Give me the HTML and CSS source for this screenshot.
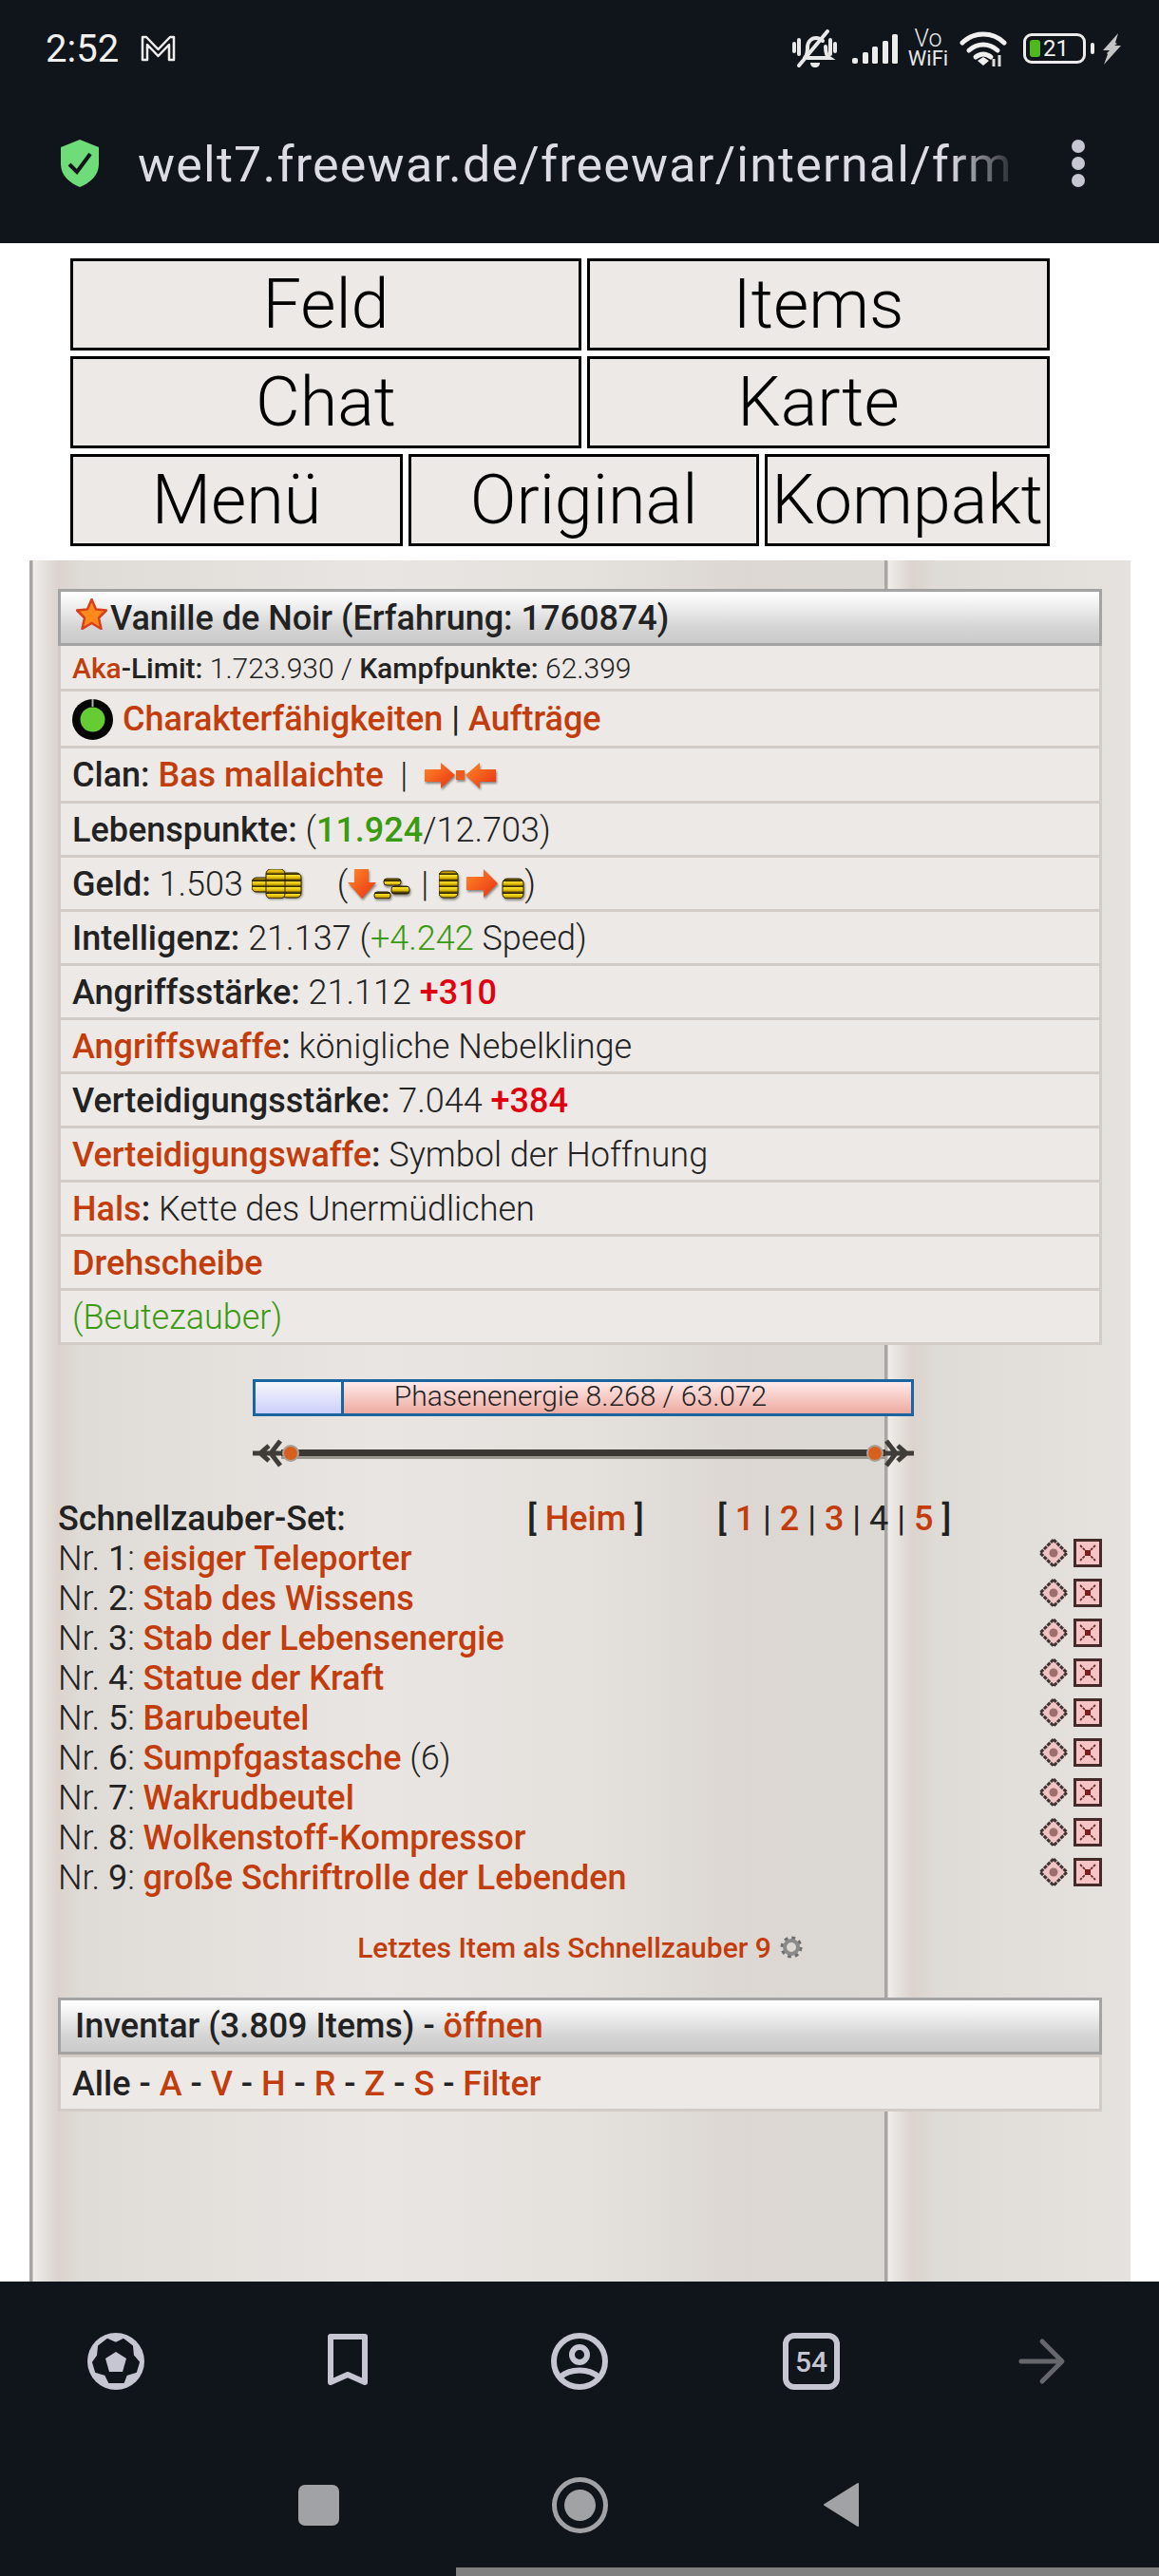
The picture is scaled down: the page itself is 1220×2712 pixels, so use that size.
FILE: index.html
```html
<!DOCTYPE html>
<html lang="de">
<head>
    <meta charset="UTF-8">
    <meta name="viewport" content="width=device-width, initial-scale=1.0">
    <title>Freewar</title>
    <link rel="stylesheet" href="styles.css">
</head>
<body>
    <svg class="defs" width="0" height="0">
        <defs>
            <linearGradient id="coinStripes" x1="0" y1="0" x2="0" y2="6.500" gradientUnits="userSpaceOnUse" spreadMethod="repeat">
                <stop offset="0" stop-color="#fbe330"/>
                <stop offset=".5" stop-color="#d8b000"/>
                <stop offset=".72" stop-color="#5a4a00"/>
                <stop offset="1" stop-color="#1e1800"/>
            </linearGradient>
            <linearGradient id="arrowFill" x1="0" y1="0" x2="1" y2="1">
                <stop offset="0" stop-color="#ff8a2a"/>
                <stop offset="1" stop-color="#e8300f"/>
            </linearGradient>
            <symbol id="quickUse" viewBox="0 0 30 30">
                <path d="M15 1 29 15 15 29 1 15Z" fill="#f0c4c4" stroke="#3f3232" stroke-width="3" stroke-dasharray="4 1"/>
                <circle cx="15" cy="15" r="4.500" fill="#9c6e6e"/>
            </symbol>
            <symbol id="quickDel" viewBox="0 0 30 30">
                <rect x="1.500" y="1.500" width="27" height="27" fill="#f6c4c4" stroke="#452a2a" stroke-width="3"/>
                <path d="M7 7 23 23M23 7 7 23" stroke="#6c2c2c" stroke-width="1.800" stroke-dasharray="3 1"/>
                <rect x="12" y="12" width="6" height="6" fill="#7a1e1e"/>
            </symbol>
        </defs>
    </svg>

    <header class="topbar">
        <div class="statusbar">
            <span class="clock">2:52</span>
            <svg class="gmail" viewBox="0 0 37 28"><path d="M2 26V2h4l12.500 13L31 2h4v24h-5V10L18.500 22 7 10v16Z" fill="none" stroke="#eee" stroke-width="2.500" stroke-linejoin="round"/></svg>
            <div class="status-icons">
                <svg class="ic-bell" viewBox="0 0 49 41"><g fill="none" stroke="#e8e8e8" stroke-width="4" stroke-linecap="round"><path d="M14 30c2-2 3-5 3-11 0-6 4-10 9-10 3 0 5 1 7 3M36 18c0 6 1 10 4 12H17"/><path d="M38 2 8 38"/><path d="M3 15v8M8 11v15M41 11v15M46 15v8"/></g><path d="M20 35h10c0 3-2 5-5 5s-5-2-5-5Z" fill="#e8e8e8"/></svg>
                <svg class="ic-signal" viewBox="0 0 48 31"><g fill="#ececec"><rect x="0" y="25" width="6" height="6" rx="2"/><rect x="11" y="19" width="6" height="12" rx="1.500"/><rect x="21" y="13" width="6" height="18" rx="1.500"/><rect x="32" y="7" width="6" height="24" rx="1.500"/><rect x="42" y="0" width="6" height="31" rx="1.500"/></g></svg>
                <div class="vowifi"><span class="vo">Vo</span><span class="wifi">WiFi</span></div>
                <svg class="ic-wifi" viewBox="0 0 50 38"><g fill="none" stroke="#f0f0f0" stroke-width="5" stroke-linecap="round"><path d="M3 13C15 1 35 1 47 13"/><path d="M10 21c9-8 21-8 30 0"/><path d="M17 28c5-4 11-4 16 0"/></g><path d="M19 32l6-4 6 4-6 5Z" fill="#f0f0f0"/><path d="M36 30v8M42 26v12" stroke="#ddd" stroke-width="3"/></svg>
                <div class="battery">
                    <div class="battery-body"><span class="battery-fill"></span><span class="battery-num">21</span></div>
                    <span class="battery-nub"></span>
                </div>
                <svg class="ic-bolt" viewBox="0 0 19 33"><path d="M16 0 0 18h7l-3 3 1 1L1 33 19 13h-7l3-2-2-1Z" fill="#c4c4c4"/></svg>
            </div>
        </div>
        <div class="urlbar">
            <svg class="shield" viewBox="0 0 40 50"><path d="M20 0 40 8v18C40 38 30 46 20 50 10 46 0 38 0 26V8Z" fill="#6fdc7a"/><path d="M9 26l8 8L31 15" fill="none" stroke="#10141b" stroke-width="4"/></svg>
            <div class="url">welt7.freewar.de/freewar/internal/frm</div>
            <div class="kebab"><span></span><span></span><span></span></div>
        </div>
    </header>

    <nav class="gamenav">
        <div class="nav-row nav-row-two">
            <a class="btn">Feld</a>
            <a class="btn">Items</a>
        </div>
        <div class="nav-row nav-row-two">
            <a class="btn">Chat</a>
            <a class="btn">Karte</a>
        </div>
        <div class="nav-row nav-row-three">
            <a class="btn">Menü</a>
            <a class="btn">Original</a>
            <a class="btn">Kompakt</a>
        </div>
    </nav>

    <main class="panel">
        <section class="box">
            <div class="box-head box-head-char">
                <svg class="star" viewBox="0 0 33 33"><path d="M16.500 1 21 11.500 32 12.500 24 20.500 26.500 32 16.500 26 6.500 32 9 20.500 1 12.500 12 11.500Z" fill="#ff8a1c" stroke="#d8401c" stroke-width="2.500" stroke-linejoin="round"/></svg>
                <b>Vanille de Noir (Erfahrung: 1760874)</b>
            </div>
            <div class="row row-small"><a class="link">Aka</a><b>-Limit:</b>&nbsp;1.723.930 /&nbsp;<b>Kampfpunkte:</b>&nbsp;62.399</div>
            <div class="row row-tall">
                <svg class="ring" viewBox="0 0 43 43"><circle cx="21.500" cy="21.500" r="21.500" fill="#050505"/><circle cx="21.500" cy="21.500" r="13" fill="#66cc33"/><path d="M21.500 0v8" stroke="#b0b0b0" stroke-width="2"/></svg>
                <a class="link link-first">Charakterfähigkeiten</a>&nbsp;|&nbsp;<a class="link">Aufträge</a>
            </div>
            <div class="row row-clan">
                <b>Clan:</b>&nbsp;<a class="link">Bas mallaichte</a>&nbsp;&nbsp;|&nbsp;&nbsp;
                <svg class="ic-clan" viewBox="0 0 75 29"><path d="M0 8h17V1l15 13-15 14v-7H0Z" fill="url(#arrowFill)"/><rect x="33" y="9" width="9" height="10" fill="#f05a1c"/><path d="M75 8H58V1L43 14l15 14v-7h17Z" fill="url(#arrowFill)"/></svg>
            </div>
            <div class="row"><b>Lebenspunkte:</b>&nbsp;(<b class="green">11.924</b>/12.703)</div>
            <div class="row">
                <b>Geld:</b>&nbsp;1.503&nbsp;
                <svg class="ic-coins" viewBox="0 0 53 31"><rect x="0" y="9" width="19" height="15" rx="5" fill="url(#coinStripes)" stroke="#2a2200"/><rect x="32" y="4" width="20" height="26" rx="5" fill="url(#coinStripes)" stroke="#2a2200"/><rect x="15" y="0" width="20" height="31" rx="5" fill="url(#coinStripes)" stroke="#2a2200"/></svg>
                <span class="paren">(</span>
                <svg class="ic-withdraw" viewBox="0 0 66 31"><path d="M7 0h15v14h8L15 31 0 14h7Z" fill="url(#arrowFill)"/><rect x="38" y="10" width="18" height="7" rx="3" fill="url(#coinStripes)" stroke="#2a2200"/><rect x="46" y="18" width="19" height="8" rx="3" fill="url(#coinStripes)" stroke="#2a2200"/><rect x="28" y="24" width="17" height="7" rx="3" fill="url(#coinStripes)" stroke="#2a2200"/></svg>
                <span class="pipe">|</span>
                <svg class="ic-deposit" viewBox="0 0 90 31"><rect x="0" y="2" width="20" height="28" rx="5" fill="url(#coinStripes)" stroke="#2a2200"/><path d="M29 8h18V0l15 15-15 15v-8H29Z" fill="url(#arrowFill)"/><rect x="67" y="10" width="22" height="21" rx="5" fill="url(#coinStripes)" stroke="#2a2200"/></svg>
                <span>)</span>
            </div>
            <div class="row"><b>Intelligenz:</b>&nbsp;21.137 (<span class="green">+4.242</span>&nbsp;Speed)</div>
            <div class="row"><b>Angriffsstärke:</b>&nbsp;21.112&nbsp;<b class="red">+310</b></div>
            <div class="row"><a class="link">Angriffswaffe</a><b>:</b>&nbsp;königliche Nebelklinge</div>
            <div class="row"><b>Verteidigungsstärke:</b>&nbsp;7.044&nbsp;<b class="red">+384</b></div>
            <div class="row"><a class="link">Verteidigungswaffe</a><b>:</b>&nbsp;Symbol der Hoffnung</div>
            <div class="row"><a class="link">Hals</a><b>:</b>&nbsp;Kette des Unermüdlichen</div>
            <div class="row"><a class="link">Drehscheibe</a></div>
            <div class="row green">(Beutezauber)</div>
        </section>

        <div class="phasebar">
            <div class="phase-fill" style="width: 13.5%"></div>
            <div class="phase-rest"></div>
            <div class="phase-text">Phasenenergie 8.268 / 63.072</div>
        </div>

        <svg class="ornament" viewBox="0 0 696 30">
            <rect x="30" y="11" width="636" height="7" fill="#3b3733"/>
            <rect x="30" y="18" width="636" height="3" fill="#9a9690"/>
            <g fill="none" stroke="#403c38" stroke-width="5">
                <path d="M0 15H30M8 15 17 7M8 15 17 23M19 15 29 2M19 15 29 28"/>
                <path d="M696 15H666M688 15 679 7M688 15 679 23M677 15 667 2M677 15 667 28"/>
            </g>
            <circle cx="40" cy="15" r="8" fill="#d9601c" stroke="#a8a098" stroke-width="2"/>
            <circle cx="655" cy="15" r="8" fill="#d9601c" stroke="#a8a098" stroke-width="2"/>
        </svg>

        <section class="quick">
            <div class="quick-head">
                <b class="quick-title">Schnellzauber-Set:</b>
                <div class="quick-home"><b>[</b>&nbsp;<a class="link">Heim</a>&nbsp;<b>]</b></div>
                <div><b>[</b>&nbsp;<a class="link">1</a>&nbsp;|&nbsp;<a class="link">2</a>&nbsp;|&nbsp;<a class="link">3</a>&nbsp;|&nbsp;<span class="quick-current">4</span>&nbsp;|&nbsp;<a class="link">5</a>&nbsp;<b>]</b></div>
            </div>
            <div class="quick-row"><span>Nr. <span class="num">1</span>: <a class="link">eisiger Teleporter</a></span><span class="quick-actions"><svg><use href="#quickUse"/></svg><svg><use href="#quickDel"/></svg></span></div>
            <div class="quick-row"><span>Nr. <span class="num">2</span>: <a class="link">Stab des Wissens</a></span><span class="quick-actions"><svg><use href="#quickUse"/></svg><svg><use href="#quickDel"/></svg></span></div>
            <div class="quick-row"><span>Nr. <span class="num">3</span>: <a class="link">Stab der Lebensenergie</a></span><span class="quick-actions"><svg><use href="#quickUse"/></svg><svg><use href="#quickDel"/></svg></span></div>
            <div class="quick-row"><span>Nr. <span class="num">4</span>: <a class="link">Statue der Kraft</a></span><span class="quick-actions"><svg><use href="#quickUse"/></svg><svg><use href="#quickDel"/></svg></span></div>
            <div class="quick-row"><span>Nr. <span class="num">5</span>: <a class="link">Barubeutel</a></span><span class="quick-actions"><svg><use href="#quickUse"/></svg><svg><use href="#quickDel"/></svg></span></div>
            <div class="quick-row"><span>Nr. <span class="num">6</span>: <a class="link">Sumpfgastasche</a> (6)</span><span class="quick-actions"><svg><use href="#quickUse"/></svg><svg><use href="#quickDel"/></svg></span></div>
            <div class="quick-row"><span>Nr. <span class="num">7</span>: <a class="link">Wakrudbeutel</a></span><span class="quick-actions"><svg><use href="#quickUse"/></svg><svg><use href="#quickDel"/></svg></span></div>
            <div class="quick-row"><span>Nr. <span class="num">8</span>: <a class="link">Wolkenstoff-Kompressor</a></span><span class="quick-actions"><svg><use href="#quickUse"/></svg><svg><use href="#quickDel"/></svg></span></div>
            <div class="quick-row"><span>Nr. <span class="num">9</span>: <a class="link">große Schriftrolle der Lebenden</a></span><span class="quick-actions"><svg><use href="#quickUse"/></svg><svg><use href="#quickDel"/></svg></span></div>
        </section>

        <div class="lastitem">
            <a class="link">Letztes Item als Schnellzauber 9</a>
            <svg class="gear" viewBox="0 0 24 24"><circle cx="12" cy="12" r="9" fill="none" stroke="#6e6e6e" stroke-width="5" stroke-dasharray="3.500 3.570"/><circle cx="12" cy="12" r="7" fill="none" stroke="#8a8a8a" stroke-width="4"/></svg>
        </div>

        <section class="box">
            <div class="box-head box-head-inv">Inventar (3.809 Items) -&nbsp;<a class="link">öffnen</a></div>
            <div class="row row-filter"><span>Alle</span>&nbsp;-&nbsp;<a class="link">A</a>&nbsp;-&nbsp;<a class="link">V</a>&nbsp;-&nbsp;<a class="link">H</a>&nbsp;-&nbsp;<a class="link">R</a>&nbsp;-&nbsp;<a class="link">Z</a>&nbsp;-&nbsp;<a class="link">S</a>&nbsp;-&nbsp;<a class="link">Filter</a></div>
        </section>
    </main>

    <footer class="bottombar">
        <div class="toolbar">
            <svg class="tool" viewBox="0 0 60 60"><circle cx="30" cy="30" r="30" fill="#c5c6d2"/><path d="M30 11 21 7 12 14 11 24 6 31 9 41 19 44 23 52H38L41 44 51 41 54 31 48 24 47 14 38 7Z" fill="#10141b" stroke="#10141b" stroke-width="2" stroke-linejoin="round"/><path d="M30 20 41 27 37 41H23L19 27Z" fill="#c5c6d2"/></svg>
            <svg class="tool" viewBox="0 0 60 60"><path d="M12 4H48V52L30 44 12 52Z" fill="none" stroke="#c5c6d2" stroke-width="6" stroke-linejoin="round"/></svg>
            <svg class="tool" viewBox="0 0 60 60"><g fill="none" stroke="#c5c6d2" stroke-width="6"><circle cx="30" cy="30" r="27"/><circle cx="30" cy="23" r="8"/><path d="M9 47C20 37 40 37 51 47"/></g></svg>
            <div class="tabs">54</div>
            <svg class="tool tool-off" viewBox="0 0 60 60"><path d="M7 30H48M29 9 50 30 29 51" fill="none" stroke="#66676d" stroke-width="5" stroke-linecap="round" stroke-linejoin="round"/></svg>
        </div>
        <div class="sysnav">
            <span class="sys-square"></span>
            <span class="sys-circle"><span></span></span>
            <svg class="sys-back" viewBox="0 0 39 48"><path d="M37 2 2 24 37 46Z" fill="#a0a2a5" stroke="#a0a2a5" stroke-width="2" stroke-linejoin="round"/></svg>
        </div>
        <div class="scrollthumb"></div>
    </footer>
</body>
</html>
```

FILE: styles.css
```css
* {
    box-sizing: border-box;
}
body {
    margin: 0;
    width: 1220px;
    height: 2712px;
    overflow: hidden;
    background-color: #fff;
    color: #222;
    font-family: Roboto, "Liberation Sans", sans-serif;
    font-size: 36px;
    font-weight: 300;
}
b {
    font-weight: 500;
}
.defs {
    display: block;
    height: 0;
}

/* phone status bar + browser url */
.topbar {
    height: 256px;
    background-color: #10141b;
}
.statusbar {
    height: 102px;
    padding: 0 40px 0 48px;
    display: flex;
    align-items: center;
}
.clock {
    color: #f0f0f0;
    font-size: 40px;
    font-weight: 400;
}
.gmail {
    width: 37px;
    height: 28px;
    margin-left: 23px;
}
.status-icons {
    margin-left: auto;
    display: flex;
    align-items: center;
}
.ic-bell {
    width: 49px;
    height: 41px;
}
.ic-signal {
    width: 48px;
    height: 31px;
    margin-left: 15px;
}
.vowifi {
    width: 44px;
    margin-left: 10px;
    color: #e8e8e8;
    text-align: center;
    display: flex;
    flex-direction: column;
    align-items: center;
}
.vo {
    font-size: 25px;
    font-weight: 300;
    line-height: 21px;
}
.wifi {
    font-size: 22px;
    font-weight: 400;
    line-height: 21px;
}
.ic-wifi {
    width: 50px;
    height: 38px;
    margin-left: 11px;
}
.battery {
    margin-left: 17px;
    display: flex;
    align-items: center;
    gap: 5px;
}
.battery-body {
    width: 66px;
    height: 32px;
    padding: 4px;
    border: 3px solid #ececec;
    border-radius: 9px;
    display: flex;
    align-items: center;
    gap: 3px;
}
.battery-fill {
    width: 11px;
    height: 100%;
    background-color: #4eb81c;
    border-radius: 3px;
}
.battery-num {
    color: #f0f0f0;
    font-size: 24px;
    font-weight: 400;
}
.battery-nub {
    width: 4px;
    height: 12px;
    background-color: #ececec;
    border-radius: 2px;
}
.ic-bolt {
    width: 19px;
    height: 33px;
    margin-left: 9px;
}
.urlbar {
    height: 140px;
    display: flex;
    align-items: center;
}
.shield {
    width: 40px;
    height: 50px;
    margin-left: 64px;
}
.url {
    width: 929px;
    margin-left: 41px;
    padding-top: 2px;
    white-space: nowrap;
    color: #dcdce4;
    font-size: 52px;
    font-weight: 400;
    letter-spacing: 1.2px;
    -webkit-mask-image: linear-gradient(to right, #000 92%, transparent);
    mask-image: linear-gradient(to right, #000 92%, transparent);
}
.kebab {
    margin-left: 54px;
    display: flex;
    flex-direction: column;
    gap: 4px;
}
.kebab span {
    width: 14px;
    height: 14px;
    background-color: #c5c6d2;
    border-radius: 50%;
}

/* game buttons */
.gamenav {
    width: 1031px;
    margin: 16px 0 15px 74px;
    display: flex;
    flex-direction: column;
    gap: 6px;
}
.nav-row {
    height: 97px;
    display: grid;
    gap: 6px;
}
.nav-row-two {
    grid-template-columns: 538px 487px;
}
.nav-row-three {
    grid-template-columns: 350px 369px 300px;
}
.btn {
    border: 3px solid #000;
    background-color: #ece9e6;
    color: #000;
    font-size: 72px;
    font-weight: 300;
    display: flex;
    align-items: center;
    justify-content: center;
    white-space: nowrap;
}

/* game frame */
.panel {
    width: 1159px;
    height: 1812px;
    margin-left: 31px;
    padding: 30px 30px 0;
    overflow: hidden;
    background-image: linear-gradient(to right, #a9a6a2 0, #a9a6a2 3px, #f0eeeb 4px, #e8e4e0 12px, #dcd3cd 30px, #dfdbd6 55px, #e2dfdb 150px, #e9e5e2 370px, #e4e0dc 600px, #dcd7d2 750px, #dcd8d3 900px);
    background-size: 900px 100%;
}
.box-head {
    height: 60px;
    border: 3px solid #a3a3a3;
    background: linear-gradient(#fff, #f4f4f4 20%, #d4d4d4 70%, #cbcbcb);
    display: flex;
    align-items: center;
}
.box-head-char {
    padding: 1px 0 0 16px;
}
.box-head-inv {
    padding-left: 15px;
    font-weight: 500;
}
.star {
    width: 33px;
    height: 33px;
    margin: -8px 3px 0 0;
}
.row {
    height: 57px;
    padding: 1px 0 0 12px;
    background-color: #ece9e6;
    border: solid #d3ccc6;
    border-width: 0 3px 3px;
    display: flex;
    align-items: center;
    white-space: nowrap;
}
.row-small {
    height: 48px;
    padding-top: 2px;
    font-size: 30px;
}
.row-tall {
    height: 60px;
    font-weight: 400;
}
.row-clan {
    height: 58px;
}
.row-filter {
    height: 60px;
    padding-left: 12px;
    border-width: 3px;
    font-weight: 500;
}
.link {
    color: #c23c0c;
    font-weight: 500;
}
.green {
    color: #3a9a10;
}
.red {
    color: #e00010;
}
.ring {
    width: 43px;
    height: 43px;
}
.link-first {
    margin-left: 10px;
}
.ic-clan, .ic-withdraw, .ic-deposit {
    filter: drop-shadow(1px 2px 1px #8a8580);
}
.ic-clan {
    width: 75px;
    height: 29px;
}
.ic-coins {
    width: 53px;
    height: 31px;
    filter: drop-shadow(1px 1px 1px #8a8580);
}
.paren {
    margin-left: 37px;
}
.ic-withdraw {
    width: 66px;
    height: 31px;
}
.pipe {
    margin: 0 11px;
}
.ic-deposit {
    width: 90px;
    height: 31px;
}

.phasebar {
    position: relative;
    width: 696px;
    height: 39px;
    margin: 36px 0 0 205px;
    border: 3px solid #1a64a0;
    display: flex;
}
.phase-fill {
    border-right: 3px solid #1a64a0;
    background: linear-gradient(#f6f6fb, #ccd0fb);
}
.phase-rest {
    flex: 1;
    background: linear-gradient(#ffeaea, #eeaaa0);
}
.phase-text {
    position: absolute;
    left: 0;
    right: 6px;
    top: -3px;
    text-align: center;
    font-size: 30px;
    line-height: 36px;
}
.ornament {
    display: block;
    width: 696px;
    height: 30px;
    margin: 24px 0 0 205px;
}

/* quick spells */
.quick {
    margin-top: 33px;
}
.quick-head {
    height: 42px;
    display: flex;
    align-items: center;
    font-weight: 400;
}
.quick-title {
    width: 494px;
}
.quick-home {
    width: 200px;
}
.quick-current {
    font-weight: 400;
}
.quick-row {
    height: 42px;
    display: flex;
    align-items: center;
    justify-content: space-between;
    font-weight: 300;
}
.quick-row .num {
    font-weight: 400;
}
.quick-actions {
    margin-top: -12px;
    display: flex;
    gap: 6px;
}
.quick-actions svg {
    width: 30px;
    height: 30px;
}
.lastitem {
    height: 40px;
    margin-top: 32px;
    margin-bottom: 33px;
    display: flex;
    align-items: center;
    justify-content: center;
    gap: 9px;
    font-size: 30px;
}
.gear {
    width: 24px;
    height: 24px;
}

/* browser toolbar + android buttons */
.bottombar {
    height: 310px;
    background-color: #10141b;
    display: flex;
    flex-direction: column;
}
.toolbar {
    height: 60px;
    margin-top: 54px;
    display: grid;
    grid-template-columns: repeat(5, 244px);
    justify-items: center;
    align-items: center;
}
.tool {
    width: 60px;
    height: 60px;
}
.tabs {
    width: 60px;
    height: 60px;
    border: 6px solid #c5c6d2;
    border-radius: 12px;
    color: #c5c6d2;
    font-size: 30px;
    font-weight: 500;
    display: flex;
    align-items: center;
    justify-content: center;
}
.sysnav {
    height: 60px;
    margin-top: 91px;
    display: grid;
    grid-template-columns: repeat(3, 275px);
    justify-content: center;
    justify-items: center;
    align-items: center;
}
.sys-square {
    width: 43px;
    height: 43px;
    background-color: #a0a2a5;
    border-radius: 7px;
}
.sys-circle {
    width: 59px;
    height: 59px;
    border: 5px solid #a0a2a5;
    border-radius: 50%;
    display: flex;
    align-items: center;
    justify-content: center;
}
.sys-circle span {
    width: 33px;
    height: 33px;
    background-color: #a0a2a5;
    border-radius: 50%;
}
.sys-back {
    width: 39px;
    height: 48px;
}
.scrollthumb {
    height: 9px;
    margin: auto 0 0 480px;
    background-color: #808080;
}
```
